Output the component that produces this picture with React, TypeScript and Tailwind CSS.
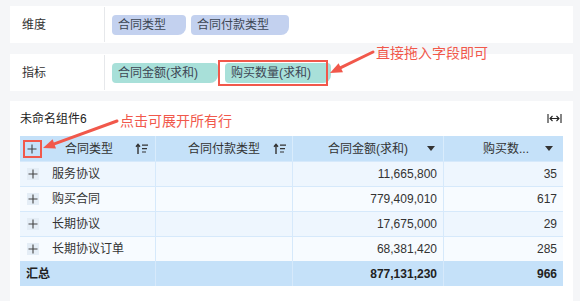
import React from "react";

const font = { fontFamily: '"Liberation Sans", "Noto Sans CJK SC", sans-serif' };

function SortIcon() {
  return (
    <svg width="14" height="12" viewBox="0 0 14 12" className="shrink-0">
      <path d="M3 11V1.5M1 3.8L3 1.3L5 3.8" stroke="#333" strokeWidth="1.4" fill="none" />
      <path d="M7 2.2H13M7 5.6H12M7 9H11" stroke="#333" strokeWidth="1.2" />
    </svg>
  );
}

function Caret() {
  return (
    <svg width="8" height="5" viewBox="0 0 8 5" className="shrink-0">
      <path d="M0 0H8L4 5Z" fill="#333" />
    </svg>
  );
}

function Plus({ box }: { box?: boolean }) {
  return (
    <div className={"w-[12px] h-[12px] flex items-center justify-center " + (box ? "bg-[#e4edf6]" : "")}>
      <svg width="10" height="10" viewBox="0 0 10 10">
        <path d="M5 0.5V9.5M0.5 5H9.5" stroke="#444" strokeWidth="1.1" />
      </svg>
    </div>
  );
}

function Chip({ children, teal }: { children: React.ReactNode; teal?: boolean }) {
  return (
    <div
      className={
        "h-[20px] flex items-center pl-[6px] pr-[20px] rounded-[4px] rounded-br-[8px] text-[12px] text-[#3d4654] " +
        (teal ? "bg-[#a8e0d9]" : "bg-[#c3d1ef]")
      }
    >
      {children}
    </div>
  );
}

const rows = [
  { name: "服务协议", amt: "11,665,800", qty: "35" },
  { name: "购买合同", amt: "779,409,010", qty: "617" },
  { name: "长期协议", amt: "17,675,000", qty: "29" },
  { name: "长期协议订单", amt: "68,381,420", qty: "285" },
];

const cols = "grid grid-cols-[136px_137px_151px_119px]";

export default function App() {
  return (
    <div className="relative w-[580px] h-[301px] bg-[#f5f6f8] overflow-hidden pt-[6px] pl-[10px] pr-[7px] flex flex-col" style={font}>
      {/* panel 1 */}
      <div className="h-[37px] bg-white flex items-center shrink-0">
        <div className="w-[95px] h-[35px] flex items-center pl-[12px] border-r border-[#e6e8eb] text-[12px] text-[#333]">维度</div>
        <div className="flex items-center gap-[5px] pl-[7px]">
          <Chip>合同类型</Chip>
          <Chip>合同付款类型</Chip>
        </div>
      </div>
      {/* panel 2 */}
      <div className="h-[37px] bg-white flex items-center shrink-0 mt-[11px]">
        <div className="w-[95px] h-[35px] flex items-center pl-[12px] border-r border-[#e6e8eb] text-[12px] text-[#333]">指标</div>
        <div className="flex items-center gap-[7px] pl-[7px]">
          <Chip teal>合同金额(求和)</Chip>
          <Chip teal>购买数量(求和)</Chip>
        </div>
      </div>
      {/* panel 3 */}
      <div className="flex-1 bg-white mt-[10px] px-[10px]">
        <div className="h-[35px] flex items-center justify-between text-[12px] text-[#222]">
          <span className="pt-[1px]">未命名组件6</span>
          <svg width="15" height="11" viewBox="0 0 15 11" className="mr-[1px]">
            <path d="M1 1V10M14 1V10M3 5.5H12M5.5 3L3 5.5L5.5 8M9.5 3L12 5.5L9.5 8" stroke="#222" strokeWidth="1.1" fill="none" />
          </svg>
        </div>
        <div className="text-[12px] text-[#333]">
          {/* header */}
          <div className={cols + " h-[25px] bg-[#c5e1f9]"}>
            <div className="flex items-center pl-[6px] pr-[6px] border-r border-[#d9ecfc]">
              <Plus />
              <span className="ml-[27px] flex-1">合同类型</span>
              <SortIcon />
            </div>
            <div className="flex items-center justify-end gap-[13px] pr-[5px] border-r border-[#d9ecfc]">
              <span>合同付款类型</span>
              <SortIcon />
            </div>
            <div className="flex items-center justify-end gap-[19px] pr-[8px] border-r border-[#d9ecfc]">
              <span>合同金额(求和)</span>
              <Caret />
            </div>
            <div className="flex items-center justify-end gap-[16px] pr-[10px]">
              <span>购买数...</span>
              <Caret />
            </div>
          </div>
          {rows.map((r, i) => (
            <div key={r.name} className={cols + " h-[25px] border-t border-[#d6e9fb] " + (i % 2 === 0 ? "bg-[#eef6fe]" : "bg-[#f7fbff]")}>
              <div className="flex items-center pl-[7px] border-r border-[#d6e9fb]">
                <Plus box />
                <span className="ml-[13px]">{r.name}</span>
              </div>
              <div className="border-r border-[#d6e9fb]" />
              <div className="flex items-center justify-end pr-[6px] border-r border-[#d6e9fb]">{r.amt}</div>
              <div className="flex items-center justify-end pr-[6px]">{r.qty}</div>
            </div>
          ))}
          <div className={cols + " h-[25px] bg-[#c5e1f9] font-bold text-[#222]"}>
            <div className="flex items-center pl-[6px] border-r border-[#d6e9fb]">汇总</div>
            <div className="border-r border-[#d6e9fb]" />
            <div className="flex items-center justify-end pr-[6px] border-r border-[#d6e9fb]">877,131,230</div>
            <div className="flex items-center justify-end pr-[6px]">966</div>
          </div>
        </div>
      </div>

      {/* annotations */}
      <div className="absolute left-[218px] top-[60px] w-[110px] h-[26px] border-2 border-[#f1584b] pointer-events-none" />
      <div className="absolute left-[23px] top-[140px] w-[19px] h-[18px] border-2 border-[#f1584b] pointer-events-none" />
      <div className="absolute left-[376px] top-[43px] text-[14px] leading-[20px] text-[#f1584b] whitespace-nowrap">直接拖入字段即可</div>
      <div className="absolute left-[120px] top-[111px] text-[14px] leading-[20px] text-[#f1584b] whitespace-nowrap">点击可展开所有行</div>
      <svg className="absolute left-0 top-0 pointer-events-none" width="580" height="301" viewBox="0 0 580 301">
        <line x1="373" y1="52" x2="340.8" y2="67.7" stroke="#f1584b" strokeWidth="3" strokeLinecap="round" />
        <polygon points="330,73 343,72.2 338.6,63.2" fill="#f1584b" />
        <line x1="117" y1="121" x2="54.3" y2="143.9" stroke="#f1584b" strokeWidth="3" strokeLinecap="round" />
        <polygon points="43,148 56,148.6 52.6,139.2" fill="#f1584b" />
      </svg>
    </div>
  );
}
